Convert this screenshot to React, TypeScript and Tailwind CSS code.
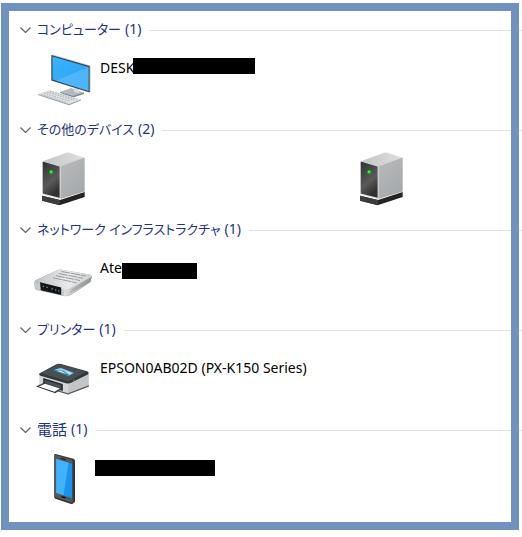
import { useState, type ReactNode } from 'react';

function Icon({ children }: { children: ReactNode }) {
  return (
    <svg aria-hidden="true" viewBox="0 0 64 64" className="mt-1.5 size-16 shrink-0">
      {children}
    </svg>
  );
}

function ComputerIcon() {
  return (
    <Icon>
      <defs>
        <linearGradient id="screen" x1="0" y1="0" x2="1" y2="1">
          <stop offset="0" stopColor="#38b4ff" />
          <stop offset="1" stopColor="#2a9ff0" />
        </linearGradient>
      </defs>
      <path d="M28 46 39 42 52 47 41 51Z" fill="#b4b9be" />
      <path d="M28 46 41 50 52 46.5V48L41 51.5 28 47Z" fill="#7e858b" />
      <path d="M42 41 47 42.5V47L42 46Z" fill="#d9dcdf" />
      <path d="M19.5 9 21 8.6 58.6 19.6V45.8L57.3 46.6Z" fill="#c9ced2" />
      <path d="M19.3 9 57.6 20V46.6L19.3 34.6Z" fill="#344653" />
      <path d="M20.5 10.6 56.5 21V45L20.5 33.6Z" fill="url(#screen)" />
      <path d="M56.5 21V45L24 34.7Z" fill="#6cc6ff" opacity=".5" />
      <path d="M6 48 17.5 44 49 53.5 37 58Z" fill="#dfe2e5" />
      <path d="M6 48 37 58 49 53.5V54.6L37 59.3 6 49Z" fill="#9a9fa4" />
      <path d="M12 47.2 38 55.2M15 46 42 54.2M18 45.2 45 53.4M9 48.3 34 56.3" stroke="#a9afb4" strokeWidth=".9" strokeDasharray="1.7 1" />
    </Icon>
  );
}

function ServerIcon() {
  return (
    <Icon>
      <defs>
        <linearGradient id="front" x1="0" y1="0" x2=".4" y2="1">
          <stop offset="0" stopColor="#303030" />
          <stop offset=".65" stopColor="#5a5a5a" />
          <stop offset="1" stopColor="#303030" />
        </linearGradient>
        <linearGradient id="side" x1="0" y1="0" x2=".6" y2="1">
          <stop offset="0" stopColor="#b9bbbd" />
          <stop offset="1" stopColor="#a6a9ab" />
        </linearGradient>
        <linearGradient id="lid" x1="0" y1="0" x2="1" y2="0">
          <stop offset="0" stopColor="#c4c5c7" />
          <stop offset="1" stopColor="#dedfe1" />
        </linearGradient>
      </defs>
      <path d="M10 49.8 28 54 52.7 46V51L27.5 59.2 10 54.7Z" fill="#242424" />
      <path d="M10 49.8 28 54V59L10 54.7Z" fill="#3d3d3d" />
      <path d="M10.7 15.2 35.7 6.2 52.7 11.7 28.3 20.5Z" fill="url(#lid)" />
      <path d="M28.3 20.3 52.7 11.5V45.5L28.3 53Z" fill="url(#side)" />
      <path d="M10.7 15.2 28.3 20.3V53L10.7 48.5Z" fill="#dadada" />
      <path d="M10.7 15.4 27.6 20.4V51.8L10.7 47.6Z" fill="url(#front)" />
      <circle cx="19.3" cy="26.2" r="2.2" fill="#13a51a" />
      <circle cx="19" cy="25.7" r="1.3" fill="#42ef42" />
    </Icon>
  );
}

function RouterIcon() {
  return (
    <Icon>
      <defs>
        <linearGradient id="routerTop" x1="0" y1=".5" x2="1" y2=".5">
          <stop offset="0" stopColor="#bfc1c2" />
          <stop offset=".6" stopColor="#e9eaea" />
          <stop offset="1" stopColor="#d0d1d2" />
        </linearGradient>
        <linearGradient id="routerSide" x1="0" y1="0" x2="1" y2="0">
          <stop offset="0" stopColor="#dedfdf" />
          <stop offset="1" stopColor="#969899" />
        </linearGradient>
      </defs>
      <path d="M2.3 36Q2.3 34.8 4 34L25 24.3Q27.5 23.2 30 23.7L57.5 28.6Q60 29.2 59.8 31.5L58.5 36 39 49Q36 50.6 32 50L4.5 44Q2.8 43.4 2.6 41Z" fill="#a3a6a7" />
      <path d="M2.6 36 33 43.5V50L5 44Q3 43.5 2.8 41Z" fill="#c8caca" />
      <path d="M32 43.5 59.5 31 58.3 36 39 48.8Q36 50.4 32 49.8Z" fill="url(#routerSide)" />
      <path d="M2.3 35.6 25 24.3Q27.5 23.2 30 23.7L57.5 28.6Q60.4 29.6 58.4 31.4L37.5 42.6Q34 44 30.5 43.2Z" fill="url(#routerTop)" />
      <path d="M38 46.5 58 35M39 44.3 59 33" stroke="#8b8f90" strokeWidth=".6" />
      <path d="M29.5 25.5 54 30M27 27.6 51 32.3M24 29.7 48 34.5M21 31.8 44.5 36.8" stroke="#8e9294" strokeWidth=".9" strokeDasharray="9 .8" />
      <path d="M8 36.3 29.2 41.6V49L8.8 44.2Z" fill="#111719" />
      <path d="M10.7 40.3h1.2M14.5 41.3h1.2M19.5 42.9h1.4M23.1 43.9h1.1M26.3 44.9h1" stroke="#a6babd" strokeWidth="1" />
    </Icon>
  );
}

function PrinterIcon() {
  return (
    <Icon>
      <path d="M7.3 28 36.5 36.7 56.7 27V40.3L36 48.2 7.3 39.5Z" fill="#d5d6d7" />
      <path d="M36.5 36.7 56.7 27V40.3L36 48.2Z" fill="#c4c5c7" />
      <path d="M7.3 38.7 36 47.2 56.7 39.3V40.8L36 48.5 7.3 40Z" fill="#55595b" />
      <path d="M7.3 27.5 24 18.5Q26.5 17.4 29 18L55 25.3Q57.8 26.6 55.7 28.4L39 36.8Q36.5 38 34 37.2L8.5 29.8Q6.5 28.8 7.3 27.5Z" fill="#30363a" />
      <path d="M8.4 27.2 25 18.7Q27 18 29 18.6L54.5 25.8 37.8 34.7Q36.4 35.3 34.8 34.9Z" fill="#484f53" />
      <path d="M20.7 24 29 21.8 42.5 27 36.5 30.3Z" fill="#2883bd" />
      <path d="M23 23.4 28.9 22 41.7 27 36.6 29.5Z" fill="#91c9ee" />
      <path d="M22 25 31 24.8 37 28.8 34.7 29.7Z" fill="#317f77" />
      <path d="m25 25 5 .3 5 3Z" fill="#ecf7fa" />
      <path d="m33 25 4 1 3 1.4-3 1.2Z" fill="#bae2f9" />
      <path d="M41 34.5 42.5 33.8" stroke="#5cb554" strokeWidth="1" />
      <path d="M11.2 32 30.8 38V45L11.2 39Z" fill="#262d31" />
      <path d="M12.7 34 29 39V44L12.7 38.7Z" fill="#495258" />
      <path d="M4 40.5 12 36.8 30 42.5 23.3 47.3Z" fill="#30373b" />
      <path d="M6.7 40.4 13 37.7 28 42.6 22.6 45.8Z" fill="#fff" />
    </Icon>
  );
}

function PhoneIcon() {
  return (
    <Icon>
      <path d="M22.2 9Q22.2 7.8 23.7 8L41.3 12.8Q43 13.4 43 15V55.8L40.4 58 39 58 23.3 52.7Q22.2 52.2 22.2 50.8Z" fill="#343738" />
      <path d="M23 9.5Q23 8.8 24 9L39.5 13.5Q40.7 14 40.7 15.2V56.8L24 51.6Q23 51.2 23 50.2Z" fill="#55585a" />
      <path d="M24.2 13 40 17.8V51.9L24.2 46.9Z" fill="#1695f0" />
      <path d="M24.2 13 36.5 16.7 31.5 49.1 24.2 46.9Z" fill="#42b2fa" />
      <path d="m29 12.3 4.5 1.4" stroke="#171b1d" strokeWidth="1.1" strokeLinecap="round" />
      <path d="m30 50.7 3.2 1.1" stroke="#151719" strokeWidth="1.5" strokeLinecap="round" />
    </Icon>
  );
}

type GroupProps = { title: string; count: number; kanji?: boolean; children: ReactNode };

function Group({ title, count, kanji = false, children }: GroupProps) {
  const [open, setOpen] = useState(true);
  return (
    <section>
      <h2 className="flex h-5 items-center gap-2 pl-5">
        <button
          type="button"
          aria-expanded={open}
          onClick={() => setOpen(!open)}
          className="flex items-center gap-1.5 whitespace-nowrap text-[#1e3287]"
        >
          <svg aria-hidden="true" viewBox="0 0 11 6" className={open ? 'h-1.5 w-[11px]' : 'h-1.5 w-[11px] -rotate-90'}>
            <path d="m.5.5 5 5 5-5" fill="none" stroke="#666" strokeWidth="1.2" />
          </svg>
          <span className="flex h-5 items-center gap-1 pb-0.5 leading-5">
            <span className={kanji ? 'text-[15px]' : 'text-[13px]'}>{title}</span>
            <span className="text-[14px]">({count})</span>
          </span>
        </button>
        <span className="h-px flex-1 bg-[#e0e2e3]" />
      </h2>
      {open && <ul className="flex h-20 pl-8">{children}</ul>}
    </section>
  );
}

function Device({ icon, children }: { icon: ReactNode; children?: ReactNode }) {
  return (
    <li className="relative flex w-[318px] shrink-0 items-start gap-1">
      {icon}
      {children && <span className="mt-[18px] text-[14px] leading-5 whitespace-nowrap text-black">{children}</span>}
    </li>
  );
}

export default function App() {
  return (
    <main className="relative overflow-hidden bg-white pt-5 pb-[17px] font-['Noto_Sans','Noto_Sans_CJK_JP',sans-serif] [font-feature-settings:'palt']">
      <Group title="コンピューター" count={1}>
        <Device icon={<ComputerIcon />}>
          DESK
          <span className="absolute top-[18px] left-[101px] h-4 w-[122px] bg-black" />
        </Device>
      </Group>
      <Group title="その他のデバイス" count={2}>
        <Device icon={<ServerIcon />} />
        <Device icon={<ServerIcon />} />
      </Group>
      <Group title="ネットワーク インフラストラクチャ" count={1}>
        <Device icon={<RouterIcon />}>
          Ate
          <span className="absolute top-[23px] left-[90px] h-4 w-[75px] bg-black" />
        </Device>
      </Group>
      <Group title="プリンター" count={1}>
        <Device icon={<PrinterIcon />}>EPSON0AB02D (PX-K150 Series)</Device>
      </Group>
      <Group title="電話" count={1} kanji>
        <Device icon={<PhoneIcon />}>
          <span className="absolute top-5 left-[63px] h-4 w-[120px] bg-black" />
        </Device>
      </Group>
      <div className="pointer-events-none absolute top-[3px] right-[3px] bottom-[7px] left-px border-8 border-[#7092be]" />
    </main>
  );
}
